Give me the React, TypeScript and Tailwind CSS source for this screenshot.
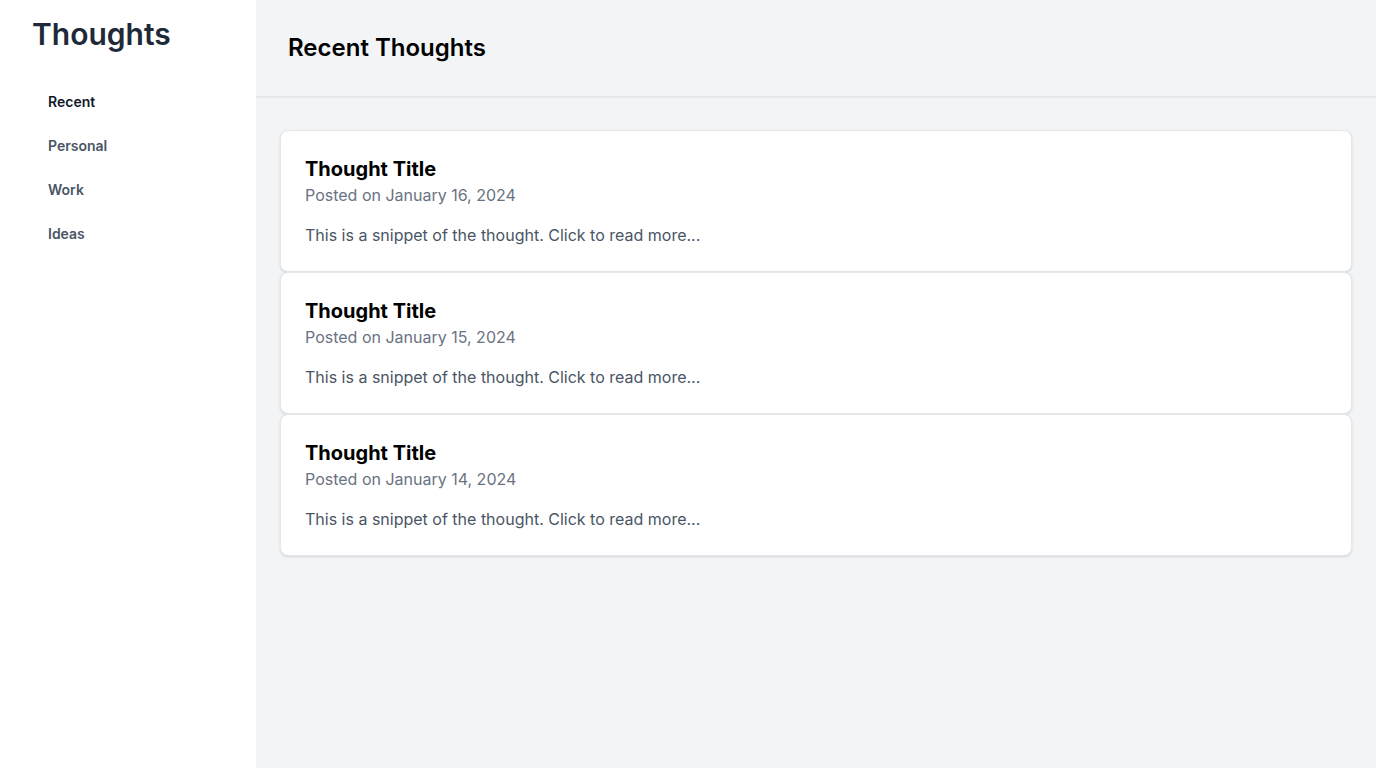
import React from 'react';

const NAV_LINKS = [
  { label: 'Recent', active: true },
  { label: 'Personal', active: false },
  { label: 'Work', active: false },
  { label: 'Ideas', active: false },
];

const THOUGHTS = [
  { id: 1, title: 'Thought Title', date: 'January 16, 2024' },
  { id: 2, title: 'Thought Title', date: 'January 15, 2024' },
  { id: 3, title: 'Thought Title', date: 'January 14, 2024' },
];

export default function App(): React.JSX.Element {
  return (
    <div
      className="flex min-h-screen bg-gray-100"
      style={{ fontFamily: 'Inter, "Noto Sans", sans-serif' }}
    >
      <aside className="w-64 shrink-0 bg-white px-8 pt-4">
        <h1 className="text-3xl font-semibold text-gray-800">Thoughts</h1>
        <nav className="mt-[28px] flex flex-col">
          {NAV_LINKS.map((link) => (
            <a
              key={link.label}
              href="#"
              className={
                link.active
                  ? 'px-4 py-3 text-sm font-semibold text-gray-900'
                  : 'px-4 py-3 text-sm font-semibold text-gray-600'
              }
            >
              {link.label}
            </a>
          ))}
        </nav>
      </aside>

      <main className="flex-1">
        <header className="border-b-2 border-gray-200 px-8 py-8">
          <h2 className="text-2xl font-semibold text-black">Recent Thoughts</h2>
        </header>
        <div className="flex flex-col px-6 pt-8">
          {THOUGHTS.map((t) => (
            <div
              key={t.id}
              className="rounded-lg border border-gray-200 bg-white p-6 shadow-sm"
            >
              <h3 className="text-xl font-bold text-black">{t.title}</h3>
              <p className="text-base text-gray-500">Posted on {t.date}</p>
              <p className="mt-4 text-base text-gray-600">
                This is a snippet of the thought. Click to read more...
              </p>
            </div>
          ))}
        </div>
      </main>
    </div>
  );
}
